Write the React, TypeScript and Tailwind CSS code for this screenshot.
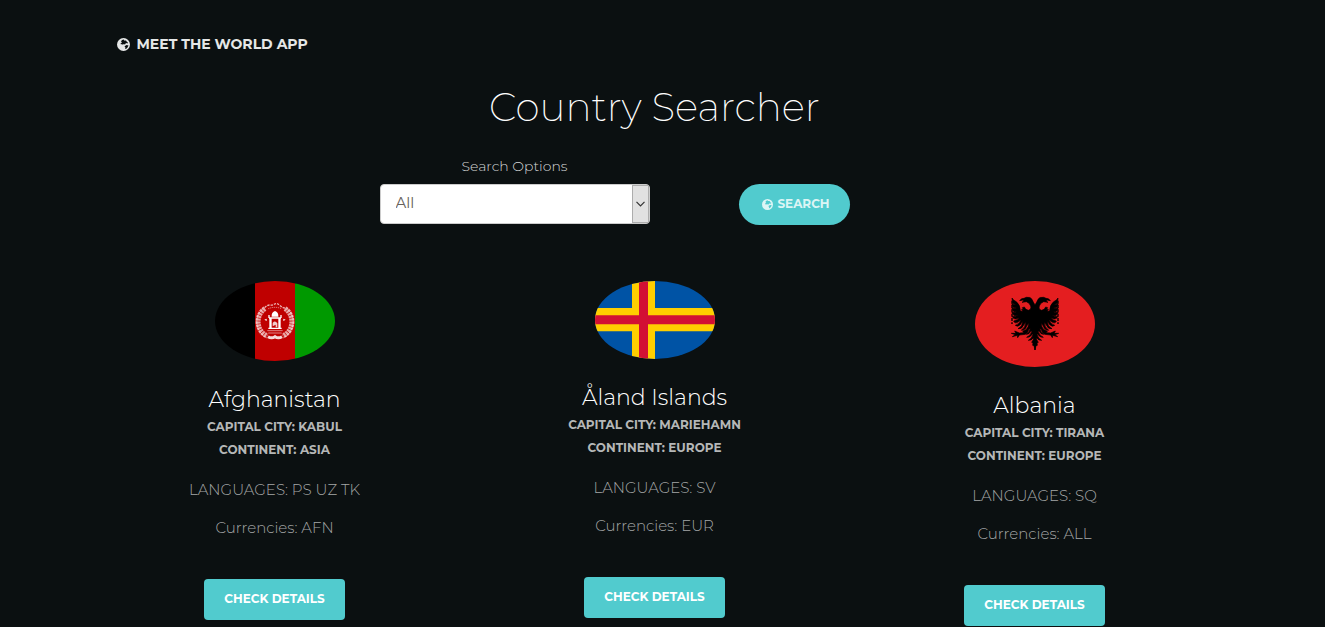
import React from "react";

function GlobeIcon({ className }: { className: string }) {
  return (
    <svg viewBox="0 0 26 26" className={className} fill="currentColor" aria-hidden="true">
      <path
        fillRule="evenodd"
        d="M13 0A13 13 0 1 0 13 26A13 13 0 1 0 13 0ZM10 4L14 3L14 5L18 5L20 8L22 9L21 11L18 10L16 13L13 12L12 14L10 12L8 13L7 11L10 9L8 7ZM16 16L19 14L23 15L21 19L18 22L16 21L17 19L15 17Z"
      />
    </svg>
  );
}

function AfghanistanFlag() {
  return (
    <svg viewBox="30 33 360 240" className="h-20 w-[120px] rounded-[50%]" role="img" aria-label="Flag of Afghanistan">
      <rect x="30" y="33" width="120" height="240" fill="#000" />
      <rect x="150" y="33" width="120" height="240" fill="#bf0000" />
      <rect x="270" y="33" width="120" height="240" fill="#009900" />
      <g fill="none" stroke="#fff">
        <path d="M180 116C150 135 153 184 187 198" strokeWidth="15" strokeDasharray="7 2" opacity=".65" />
        <path d="M240 116C270 135 267 184 233 198" strokeWidth="15" strokeDasharray="7 2" opacity=".65" />
        <path d="M174 116C146 138 150 184 184 203M246 116C274 138 270 184 236 203" strokeWidth="2" opacity=".7" />
        <path d="M179 113q8-9 16-8t14-3 15 4 17 8" strokeWidth="4" strokeDasharray="7 3" opacity=".7" />
        <path d="M190 116q20-8 40 0" strokeWidth="3" strokeDasharray="3 3" opacity=".6" />
        <path d="M189 200q11 7 21 0 10 7 21 0" strokeWidth="9" opacity=".85" />
        <path d="M190 189h40M187 182h46" strokeWidth="3" opacity=".5" />
      </g>
      <g fill="#fff">
        <path d="M200 137q0-10 10-14 10 4 10 14v3h-20zM192 142h36v4h-36zM193 146h7v29h-7zM220 146h7v29h-7zM190 173h40v4h-40z" />
        <path d="M203 159q7-9 14 1v12h-5v-8l-9 5z" opacity=".8" />
        <path d="M190 135h4v9h-4zM226 135h4v9h-4zM178 149l7-3v7zM235 146l7 3-7 4z" />
      </g>
    </svg>
  );
}

function AlandFlag() {
  return (
    <svg viewBox="30 33 360 234" className="h-[78px] w-[120px] rounded-[50%]" role="img" aria-label="Flag of Åland Islands">
      <rect x="30" y="33" width="360" height="234" fill="#0053a5" />
      <path d="M141 33h69v234h-69zM30 114h360v70H30z" fill="#ffce00" />
      <path d="M162 33h27v234h-27zM30 136h360v27H30z" fill="#d21034" />
    </svg>
  );
}

const eagleHalf =
  "M210 105Q204 96 201 88Q197 80 184 82L177 85Q168 85 164 92L174 90L177 93L171 97L184 95Q194 98 197 108Q200 119 190 121Q181 120 178 111L172 113L176 119L170 118L173 124L166 123Q166 105 154 95Q145 92 141 84L143 100L154 104Q146 105 141 101Q141 109 145 112L155 114Q147 116 141 113Q141 122 147 125L156 125Q148 128 141 126Q142 135 149 137L158 135Q151 141 142 139Q144 148 153 147L162 143Q157 152 146 153Q149 162 159 156L167 149Q164 163 151 166Q158 173 167 163L173 153Q173 169 159 176Q170 179 176 165L181 157Q183 171 169 181Q181 181 185 168L190 160Q192 172 183 179L173 184L177 188L163 189L149 183L153 190L139 190L151 194L142 200L157 196L158 203L163 195L181 193L187 188L192 177L196 176Q193 187 184 193Q192 194 198 183L201 183Q197 197 185 202Q196 203 202 192L204 193Q201 206 190 211Q200 212 205 203L205 209L200 217L204 218L203 226L207 227L210 240Z";

function AlbaniaFlag() {
  return (
    <svg viewBox="30 33 360 258" className="h-[86px] w-[120px] rounded-[50%]" role="img" aria-label="Flag of Albania">
      <rect x="30" y="33" width="360" height="258" fill="#e41e20" />
      <g stroke="#000" strokeWidth="2">
        <path d={eagleHalf} />
        <path d={eagleHalf} transform="matrix(-1 0 0 1 420 0)" />
      </g>
      <path d="M141 92v70M279 92v70" stroke="#000" strokeWidth="4" strokeDasharray="9 4" />
    </svg>
  );
}

const countries = [
  { name: "Afghanistan", capital: "KABUL", continent: "ASIA", languages: "PS UZ TK", currencies: "AFN", Flag: AfghanistanFlag },
  { name: "Åland Islands", capital: "MARIEHAMN", continent: "EUROPE", languages: "SV", currencies: "EUR", Flag: AlandFlag },
  { name: "Albania", capital: "TIRANA", continent: "EUROPE", languages: "SQ", currencies: "ALL", Flag: AlbaniaFlag },
];

export default function App() {
  return (
    <div className="min-h-screen bg-[#0b1011] pr-4 font-['Montserrat','Inter',sans-serif] font-light text-white">
      <div className="mx-auto max-w-[1140px]">
        <nav className="px-8 pt-8">
          <a href="#" className="inline-flex items-center gap-[7px] text-[14px] leading-6 font-bold text-[#e5e7e7]">
            <GlobeIcon className="size-[13px]" />
            MEET THE WORLD APP
          </a>
        </nav>

        <main>
          <h1 className="pt-[23px] text-center text-[39px] leading-[52px] font-extralight">Country Searcher</h1>

          <form className="mt-[23px] flex items-end justify-center gap-[89px] pr-[80px]" onSubmit={(e) => e.preventDefault()}>
            <div className="flex w-[270px] flex-col">
              <label htmlFor="options" className="mb-2 text-center text-[14px] leading-5 text-[#d5d7d7]">
                Search Options
              </label>
              <div className="relative">
                <select
                  id="options"
                  defaultValue="All"
                  className="block h-10 w-full appearance-none rounded border border-[#ccc] bg-white px-[15px] text-[15px] font-normal text-[#66615b]"
                >
                  <option>All</option>
                </select>
                <span className="pointer-events-none absolute inset-y-px right-px flex w-[17px] items-center justify-center border border-[#adadad] bg-[#e1e1e1]">
                  <svg viewBox="0 0 9 6" className="h-[6px] w-[9px]" fill="none" stroke="#333" strokeWidth="1.2">
                    <path d="M.5 .8 4.5 4.8 8.5 .8" />
                  </svg>
                </span>
              </div>
            </div>
            <button className="-mb-px flex h-[41px] w-[111px] items-center justify-center gap-1 rounded-full bg-[#51cbce] pl-1 text-[12px] font-bold text-[#dcf5f5]">
              <GlobeIcon className="size-[11px]" />
              SEARCH
            </button>
          </form>

          <div className="mt-[57px] grid grid-cols-3">
            {countries.map(({ name, capital, continent, languages, currencies, Flag }) => (
              <article key={name} className="flex flex-col items-center text-center">
                <Flag />
                <h2 className="mt-6 text-[22px] leading-[30px] font-light">{name}</h2>
                <h3 className="text-[12px] leading-[23px] font-bold text-[#b5b7b7]">CAPITAL CITY: {capital}</h3>
                <h3 className="text-[12px] leading-[23px] font-bold text-[#b5b7b7]">CONTINENT: {continent}</h3>
                <p className="mt-[18px] text-[15px] leading-[22px] font-light text-[#a5a7a7]">LANGUAGES: {languages}</p>
                <p className="mt-4 text-[15px] leading-[22px] font-light text-[#a5a7a7]">Currencies: {currencies}</p>
                <button className="mt-10 h-[41px] w-[141px] rounded bg-[#51cbce] text-[12px] font-bold text-white">
                  CHECK DETAILS
                </button>
              </article>
            ))}
          </div>
        </main>
      </div>
    </div>
  );
}
